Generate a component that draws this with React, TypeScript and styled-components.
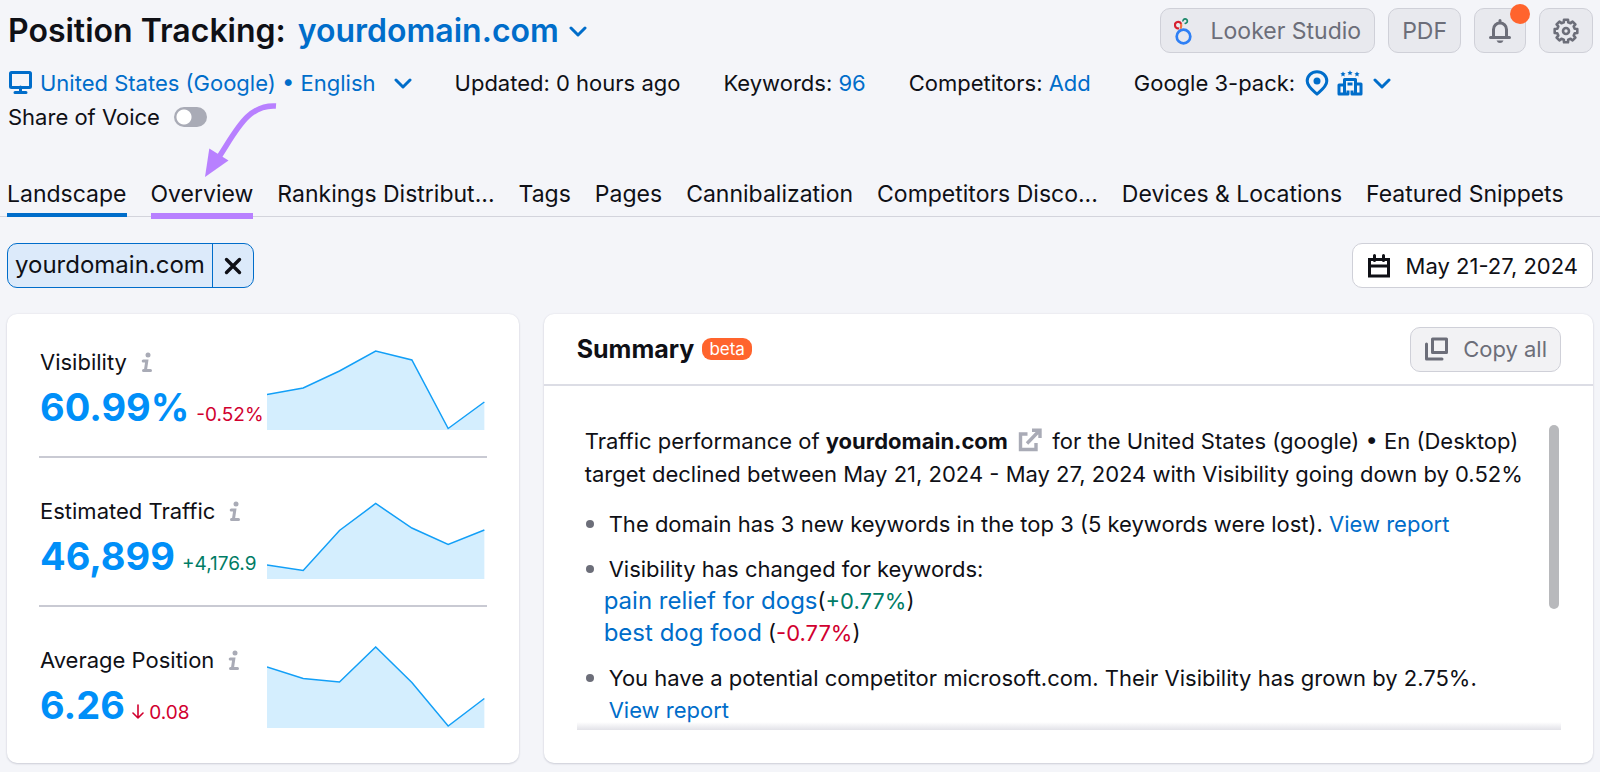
import React from 'react';
import styled, { createGlobalStyle, css } from 'styled-components';

const Global = createGlobalStyle`
  *, *::before, *::after { box-sizing: border-box; }
  body {
    margin: 0;
    background: #f4f5f9;
    color: #0f1016;
    font-family: Inter, "Liberation Sans", sans-serif;
    font-size: 22px;
    line-height: 32px;
  }
  button, input { font: inherit; color: inherit; }
  h1, h2, p, ul { margin: 0; padding: 0; }
  a { color: #006dca; text-decoration: none; }
`;

const Page = styled.div`
  position: relative;
  padding: 8px 7px 9px;
`;

const Row = styled.div`
  display: flex;
  align-items: center;
`;

const TopBar = styled(Row)`
  justify-content: space-between;
  height: 45px;
`;

const Title = styled.h1`
  display: flex;
  align-items: center;
  gap: 12px;
  padding-left: 1px;
  font-size: 32px;
  font-weight: 600;
  line-height: 40px;
`;

const PlainButton = styled.button<{ $gap?: number }>`
  display: inline-flex;
  align-items: center;
  gap: ${({ $gap = 10 }) => $gap}px;
  border: 0;
  padding: 0;
  background: none;
  color: #006dca;
  cursor: pointer;
`;

const Actions = styled(Row)`
  gap: 13px;
`;

const OutlineButton = styled.button`
  position: relative;
  display: inline-flex;
  align-items: center;
  justify-content: center;
  gap: 15px;
  height: 45px;
  padding: 0 13px;
  border: 1px solid #cfd0d8;
  border-radius: 10px;
  background: #f2f2f4;
  color: #6c6e79;
  white-space: nowrap;
  cursor: pointer;
`;

const HeaderButton = styled(OutlineButton)`
  gap: 19px;
  background: #e8e9ee;
  font-size: 23px;
`;

const DateButton = styled(OutlineButton)`
  padding: 0 14px;
  background: #fff;
  color: #0f1016;
`;

const NoticeDot = styled.span`
  position: absolute;
  top: -5px;
  right: -5px;
  width: 20px;
  height: 20px;
  border-radius: 50%;
  background: #ff642d;
`;

const MetaRow = styled(Row)`
  gap: 43px;
  padding: 1px 1px 0;
  margin-top: 13px;
  white-space: nowrap;
`;

const MetaGroup = styled(Row)<{ $wide?: boolean }>`
  gap: ${({ $wide }) => ($wide ? 10 : 8)}px;
`;

const ShareRow = styled(Row)`
  margin-top: 2px;
  padding-left: 1px;
  gap: 14px;
`;

const Toggle = styled.input`
  appearance: none;
  display: block;
  width: 33px;
  height: 20px;
  margin: 0;
  border-radius: 10px;
  background: radial-gradient(circle at 10px 10px, #fff 7px, #a9abb6 8px);
`;

const Tabs = styled.nav`
  display: flex;
  gap: 24px;
  margin: 39px -7px 0;
  padding: 0 7px;
  border-bottom: 1px solid #d3d4dc;
  font-size: 23px;
  white-space: nowrap;
`;

const Tab = styled.a<{ $bar?: string; $thick?: number }>`
  position: relative;
  padding: 6px 0;
  color: #0f1016;
  &::after {
    content: '';
    position: absolute;
    left: 0;
    right: 0;
    top: 41px;
    height: ${({ $thick = 0 }) => $thick}px;
    background: ${({ $bar = 'none' }) => $bar};
  }
`;

const Arrow = styled.svg`
  position: absolute;
  left: 200px;
  top: 98px;
  pointer-events: none;
`;

const FilterRow = styled(Row)`
  justify-content: space-between;
  margin: 26px 0;
`;

const Chip = styled.div`
  display: flex;
  height: 45px;
  border: 1px solid #006dca;
  border-radius: 10px;
  background: #dceafa;
  font-size: 24px;
`;

const ChipLabel = styled.span`
  padding: 5px 7px 0;
`;

const ChipClose = styled.button`
  display: flex;
  align-items: center;
  justify-content: center;
  width: 41px;
  padding: 0;
  border: 0;
  border-left: 1px solid #006dca;
  background: none;
  cursor: pointer;
`;

const Board = styled.main`
  display: grid;
  grid-template-columns: 512fr 1050fr;
  gap: 25px;
`;

const Card = styled.section`
  border-radius: 10px;
  background: #fff;
  box-shadow: 0 1px 2px #cdcfd8, 0 0 2px #e0e1e9;
`;

const Metrics = styled(Card)`
  padding: 0 32px;
`;

const Metric = styled.div`
  display: grid;
  grid-template-columns: minmax(0, 228fr) minmax(0, 218fr);
  align-items: start;
  padding: 32px 2px 24px 1px;
  & + & {
    padding-top: 37px;
    border-top: 2px solid #c9cad3;
  }
`;

const MetricLabel = styled(Row)`
  gap: 14px;
`;

const MetricLine = styled.div`
  display: flex;
  align-items: baseline;
  gap: 7px;
  line-height: 48px;
  margin-top: 5px;
  white-space: nowrap;
`;

const Value = styled.strong`
  color: #008ff8;
  font-size: 38px;
  font-weight: 700;
`;

const Delta = styled.span<{ $up?: boolean; $small?: boolean }>`
  color: ${({ $up }) => ($up ? '#007c65' : '#d1002f')};
  ${({ $small }) => $small && css`
    font-size: 19px;
    line-height: 24px;
  `}
`;

const Chart = styled.svg`
  display: block;
  width: 100%;
  height: 84px;
  margin-top: 2px;
`;

const SummaryHead = styled(Row)`
  justify-content: space-between;
  height: 72px;
  padding: 0 32px 0 33px;
  border-bottom: 2px solid #dcdde5;
`;

const SummaryTitle = styled(Row)`
  gap: 8px;
  h2 { font-size: 25px; font-weight: 700; }
`;

const Badge = styled.span`
  height: 22px;
  padding: 0 7px;
  border-radius: 9px;
  background: #ff642d;
  color: #fff;
  font-size: 17px;
  line-height: 22px;
`;

const SummaryBody = styled.div`
  display: flex;
  justify-content: space-between;
  margin: 39px 32px 33px 33px;
  padding: 0 2px 0 8px;
  height: 305px;
  background: linear-gradient(#fff, #e2e2e8) bottom / 100% 8px no-repeat;
`;

const Thumb = styled.div`
  flex: none;
  width: 10px;
  height: 184px;
  border-radius: 5px;
  background: #b8b9bc;
`;

const Intro = styled.p`
  line-height: 33px;
  white-space: nowrap;
  svg { vertical-align: -3px; margin: 0 4px; }
`;

const Points = styled.ul`
  list-style: none;
  li {
    position: relative;
    padding-left: 24px;
    margin-top: 17px;
  }
  li + li { margin-top: 13px; }
  li::before {
    content: '';
    position: absolute;
    left: 1px;
    top: 12px;
    width: 8px;
    height: 8px;
    border-radius: 50%;
    background: #6c6e79;
  }
`;

const Keyword = styled.div`
  margin-left: -5px;
  a { font-size: 24px; }
`;

const Chevron = () => (
  <svg width="18" height="18" viewBox="0 0 18 18" fill="none" stroke="currentColor" strokeWidth="3" strokeLinecap="round" strokeLinejoin="round">
    <path d="M2 6 9 13 16 6" />
  </svg>
);

const InfoIcon = () => (
  <svg width="12" height="21" viewBox="0 0 12 21" fill="none" stroke="#a9abb6" strokeWidth="3" strokeLinecap="round">
    <circle cx="7" cy="3" r="2.5" fill="#a9abb6" stroke="none" />
    <path d="M2.2 9h3.6L4.4 18.5M2.5 18.5h7" />
  </svg>
);

const MonitorIcon = () => (
  <svg width="24" height="24" viewBox="0 0 24 24" fill="none" stroke="currentColor" strokeWidth="3">
    <rect x="2.5" y="1.5" width="20" height="15" rx="1" />
    <path d="M12.5 16v5M7 21.5h11" strokeLinecap="round" />
  </svg>
);

const LookerIcon = () => (
  <svg width="18" height="28" viewBox="0 0 18 28" fill="none">
    <circle cx="9.5" cy="19.500" r="6.800" stroke="#2f80f5" strokeWidth="2.700" />
    <path d="M5 11.200A3.200 3.200 0 1 1 7.200 7" stroke="#d6202f" strokeWidth="2.200" />
    <path d="M7 6.800q.8 2.500-.5 5" stroke="#f4713c" strokeWidth="2.200" />
    <path d="M9 4.500a2.200 2.200 0 1 1 1.600 1.700" stroke="#1d8a6b" strokeWidth="1.700" />
  </svg>
);

const BellIcon = () => (
  <svg width="24" height="26" viewBox="0 0 24 26" fill="none" stroke="currentColor" strokeWidth="3" strokeLinecap="round">
    <path d="M2.500 19.500h19M5.500 19v-7.500a6.500 6.500 0 0 1 13 0V19M12 4V2.500" />
    <path d="M8.500 22.500h7q-1 2.500-3.500 2.500t-3.500-2.500z" fill="currentColor" stroke="none" />
  </svg>
);

const gearPath = Array.from({ length: 8 }, (_, i) => {
  const at = (deg: number, r: number) => {
    const a = ((i * 45 + deg) * Math.PI) / 180;
    return `${(13 + r * Math.cos(a)).toFixed(1)} ${(13 + r * Math.sin(a)).toFixed(1)}`;
  };
  return `${i ? 'L' : 'M'}${at(-14, 9)}L${at(-10, 11.5)}L${at(10, 11.5)}L${at(14, 9)}`;
}).join('') + 'Z';

const GearIcon = () => (
  <svg width="26" height="26" viewBox="0 0 26 26" fill="none" stroke="currentColor" strokeWidth="2.600" strokeLinejoin="round">
    <path d={gearPath} />
    <circle cx="13" cy="13" r="3" />
  </svg>
);

const PinIcon = () => (
  <svg width="24" height="26" viewBox="0 0 24 26" fill="none" stroke="currentColor" strokeWidth="3">
    <path d="M12 24C8 20.500 2.200 16.500 2.200 11a9.800 9.300 0 0 1 19.600 0c0 5.500-5.800 9.500-9.800 13z" strokeLinejoin="round" />
    <circle cx="12" cy="11" r="3.500" fill="currentColor" stroke="none" />
  </svg>
);

const star = 'l.8 1.600 1.800.3-1.300 1.200.3 1.800-1.600-.9-1.600.9.300-1.800-1.300-1.200 1.800-.3z';

const HotelIcon = () => (
  <svg width="26" height="26" viewBox="0 0 26 26" fill="none" stroke="currentColor" strokeWidth="3" strokeLinejoin="round">
    <path d="M7.500 24V9.500h11V24M7 15H2v9h9v-3.500M18.500 14H24v10h-9v-3.500M10.500 14h5" />
    <path d={`M6 1.500${star}M13 .3${star}M20 1.500${star}`} fill="currentColor" stroke="none" />
  </svg>
);

const CalendarIcon = () => (
  <svg width="24" height="26" viewBox="0 0 24 26" fill="none" stroke="currentColor" strokeWidth="3">
    <path d="M2.500 6.500h19v16.500h-19zM2.500 13h19" />
    <path d="M7.500 7.500V2.500M16.500 7.500V2.500" strokeLinecap="round" />
  </svg>
);

const CopyIcon = () => (
  <svg width="24" height="24" viewBox="0 0 24 24" fill="none" stroke="currentColor" strokeWidth="3">
    <path d="M8.500 2h14v13.500h-14z" strokeLinejoin="round" />
    <path d="M2.500 7v15H18" strokeLinecap="round" strokeLinejoin="round" />
  </svg>
);

const ExternalIcon = () => (
  <svg width="24" height="24" viewBox="0 0 24 24" fill="none" stroke="#a9abb6" strokeWidth="3.400">
    <path d="M9.500 6H2.500v15.500H18V15M14 2.200h8v7.800M21 3 9 15.500" />
  </svg>
);

const CloseIcon = () => (
  <svg width="18" height="18" viewBox="0 0 18 18" stroke="currentColor" strokeWidth="3.400" strokeLinecap="round">
    <path d="m2.500 2.500 13 13m0-13-13 13" />
  </svg>
);

const DownIcon = () => (
  <svg width="12" height="15" viewBox="0 0 12 15" fill="none" stroke="currentColor" strokeWidth="1.600" strokeLinecap="round" strokeLinejoin="round">
    <path d="M6 1v13M1 9l5 5 5-5" />
  </svg>
);

const AreaChart = ({ values }: { values: number[] }) => {
  const line = values.map((y, i) => `${((i * 218) / 6).toFixed(1)},${y}`).join(' ');
  return (
    <Chart viewBox="0 0 218 84" preserveAspectRatio="none" aria-hidden="true">
      <polygon points={`0,82 ${line} 218,82`} fill="#d4eefe" />
      <polyline points={line} fill="none" stroke="#129ff7" strokeWidth="1.500" />
    </Chart>
  );
};

const metrics = [
  { label: 'Visibility', value: '60.99%', delta: '-0.52%', values: [46.5, 40, 23, 3, 12, 80.5, 54] },
  { label: 'Estimated Traffic', value: '46,899', delta: '+4,176.9', up: true, values: [68, 73.5, 33.5, 6.5, 31, 47.5, 33] },
  { label: 'Average Position', value: '6.26', delta: '0.08', down: true, values: [21, 32.5, 36, 1, 36.5, 80, 52.5] },
];

const tabs: { name: string; bar?: string; thick?: number }[] = [
  { name: 'Landscape', bar: '#006dca', thick: 4 },
  { name: 'Overview', bar: '#b880ff', thick: 6 },
  { name: 'Rankings Distribut...' },
  { name: 'Tags' },
  { name: 'Pages' },
  { name: 'Cannibalization' },
  { name: 'Competitors Disco...' },
  { name: 'Devices & Locations' },
  { name: 'Featured Snippets' },
];

export default function App() {
  return (
    <Page>
      <Global />
      <TopBar>
        <Title>
          Position Tracking:
          <PlainButton>yourdomain.com<Chevron /></PlainButton>
        </Title>
        <Actions>
          <HeaderButton><LookerIcon />Looker Studio</HeaderButton>
          <HeaderButton>PDF</HeaderButton>
          <HeaderButton aria-label="Notifications"><BellIcon /><NoticeDot /></HeaderButton>
          <HeaderButton aria-label="Settings"><GearIcon /></HeaderButton>
        </Actions>
      </TopBar>

      <MetaRow>
        <PlainButton $gap={18}>
          <MetaGroup>
            <MonitorIcon />
            United States (Google) • English
          </MetaGroup>
          <Chevron />
        </PlainButton>
        <span>Updated: 0 hours ago</span>
        <span>Keywords: <a href="#keywords">96</a></span>
        <span>Competitors: <a href="#competitors">Add</a></span>
        <MetaGroup $wide>
          Google 3-pack:
          <PlainButton aria-label="Google 3-pack">
            <MetaGroup><PinIcon /><HotelIcon /></MetaGroup>
            <Chevron />
          </PlainButton>
        </MetaGroup>
      </MetaRow>

      <ShareRow>
        <label htmlFor="share-of-voice">Share of Voice</label>
        <Toggle id="share-of-voice" type="checkbox" />
      </ShareRow>

      <Tabs>
        {tabs.map((t) => (
          <Tab key={t.name} href="#tab" $bar={t.bar} $thick={t.thick}>{t.name}</Tab>
        ))}
      </Tabs>
      <Arrow width="80" height="82" viewBox="0 0 80 82" fill="none" aria-hidden="true">
        <path d="M76 8C48 6 36 33 19 59" stroke="#b880ff" strokeWidth="5.500" />
        <path d="M9.300 50.500 28.500 62.500 5 79z" fill="#b880ff" />
      </Arrow>

      <FilterRow>
        <Chip>
          <ChipLabel>yourdomain.com</ChipLabel>
          <ChipClose aria-label="Remove yourdomain.com"><CloseIcon /></ChipClose>
        </Chip>
        <DateButton><CalendarIcon />May 21-27, 2024</DateButton>
      </FilterRow>

      <Board>
        <Metrics>
          {metrics.map((m) => (
            <Metric key={m.label}>
              <div>
                <MetricLabel>{m.label}<InfoIcon /></MetricLabel>
                <MetricLine>
                  <Value>{m.value}</Value>
                  <Delta $up={m.up} $small>{m.down && <><DownIcon /> </>}{m.delta}</Delta>
                </MetricLine>
              </div>
              <AreaChart values={m.values} />
            </Metric>
          ))}
        </Metrics>
        <Card>
          <SummaryHead>
            <SummaryTitle><h2>Summary</h2><Badge>beta</Badge></SummaryTitle>
            <OutlineButton><CopyIcon />Copy all</OutlineButton>
          </SummaryHead>
          <SummaryBody>
            <div>
              <Intro>
                Traffic performance of <b>yourdomain.com</b> <ExternalIcon /> for the United States (google) • En (Desktop)
                <br />
                target declined between May 21, 2024 - May 27, 2024 with Visibility going down by 0.52%
              </Intro>
              <Points>
                <li>The domain has 3 new keywords in the top 3 (5 keywords were lost). <a href="#report">View report</a></li>
                <li>
                  Visibility has changed for keywords:
                  <Keyword><a href="#pain-relief">pain relief for dogs</a>(<Delta $up>+0.77%</Delta>)</Keyword>
                  <Keyword><a href="#dog-food">best dog food</a> (<Delta>-0.77%</Delta>)</Keyword>
                </li>
                <li>
                  You have a potential competitor microsoft.com. Their Visibility has grown by 2.75%.
                  <br />
                  <a href="#report">View report</a>
                </li>
              </Points>
            </div>
            <Thumb />
          </SummaryBody>
        </Card>
      </Board>
    </Page>
  );
}
